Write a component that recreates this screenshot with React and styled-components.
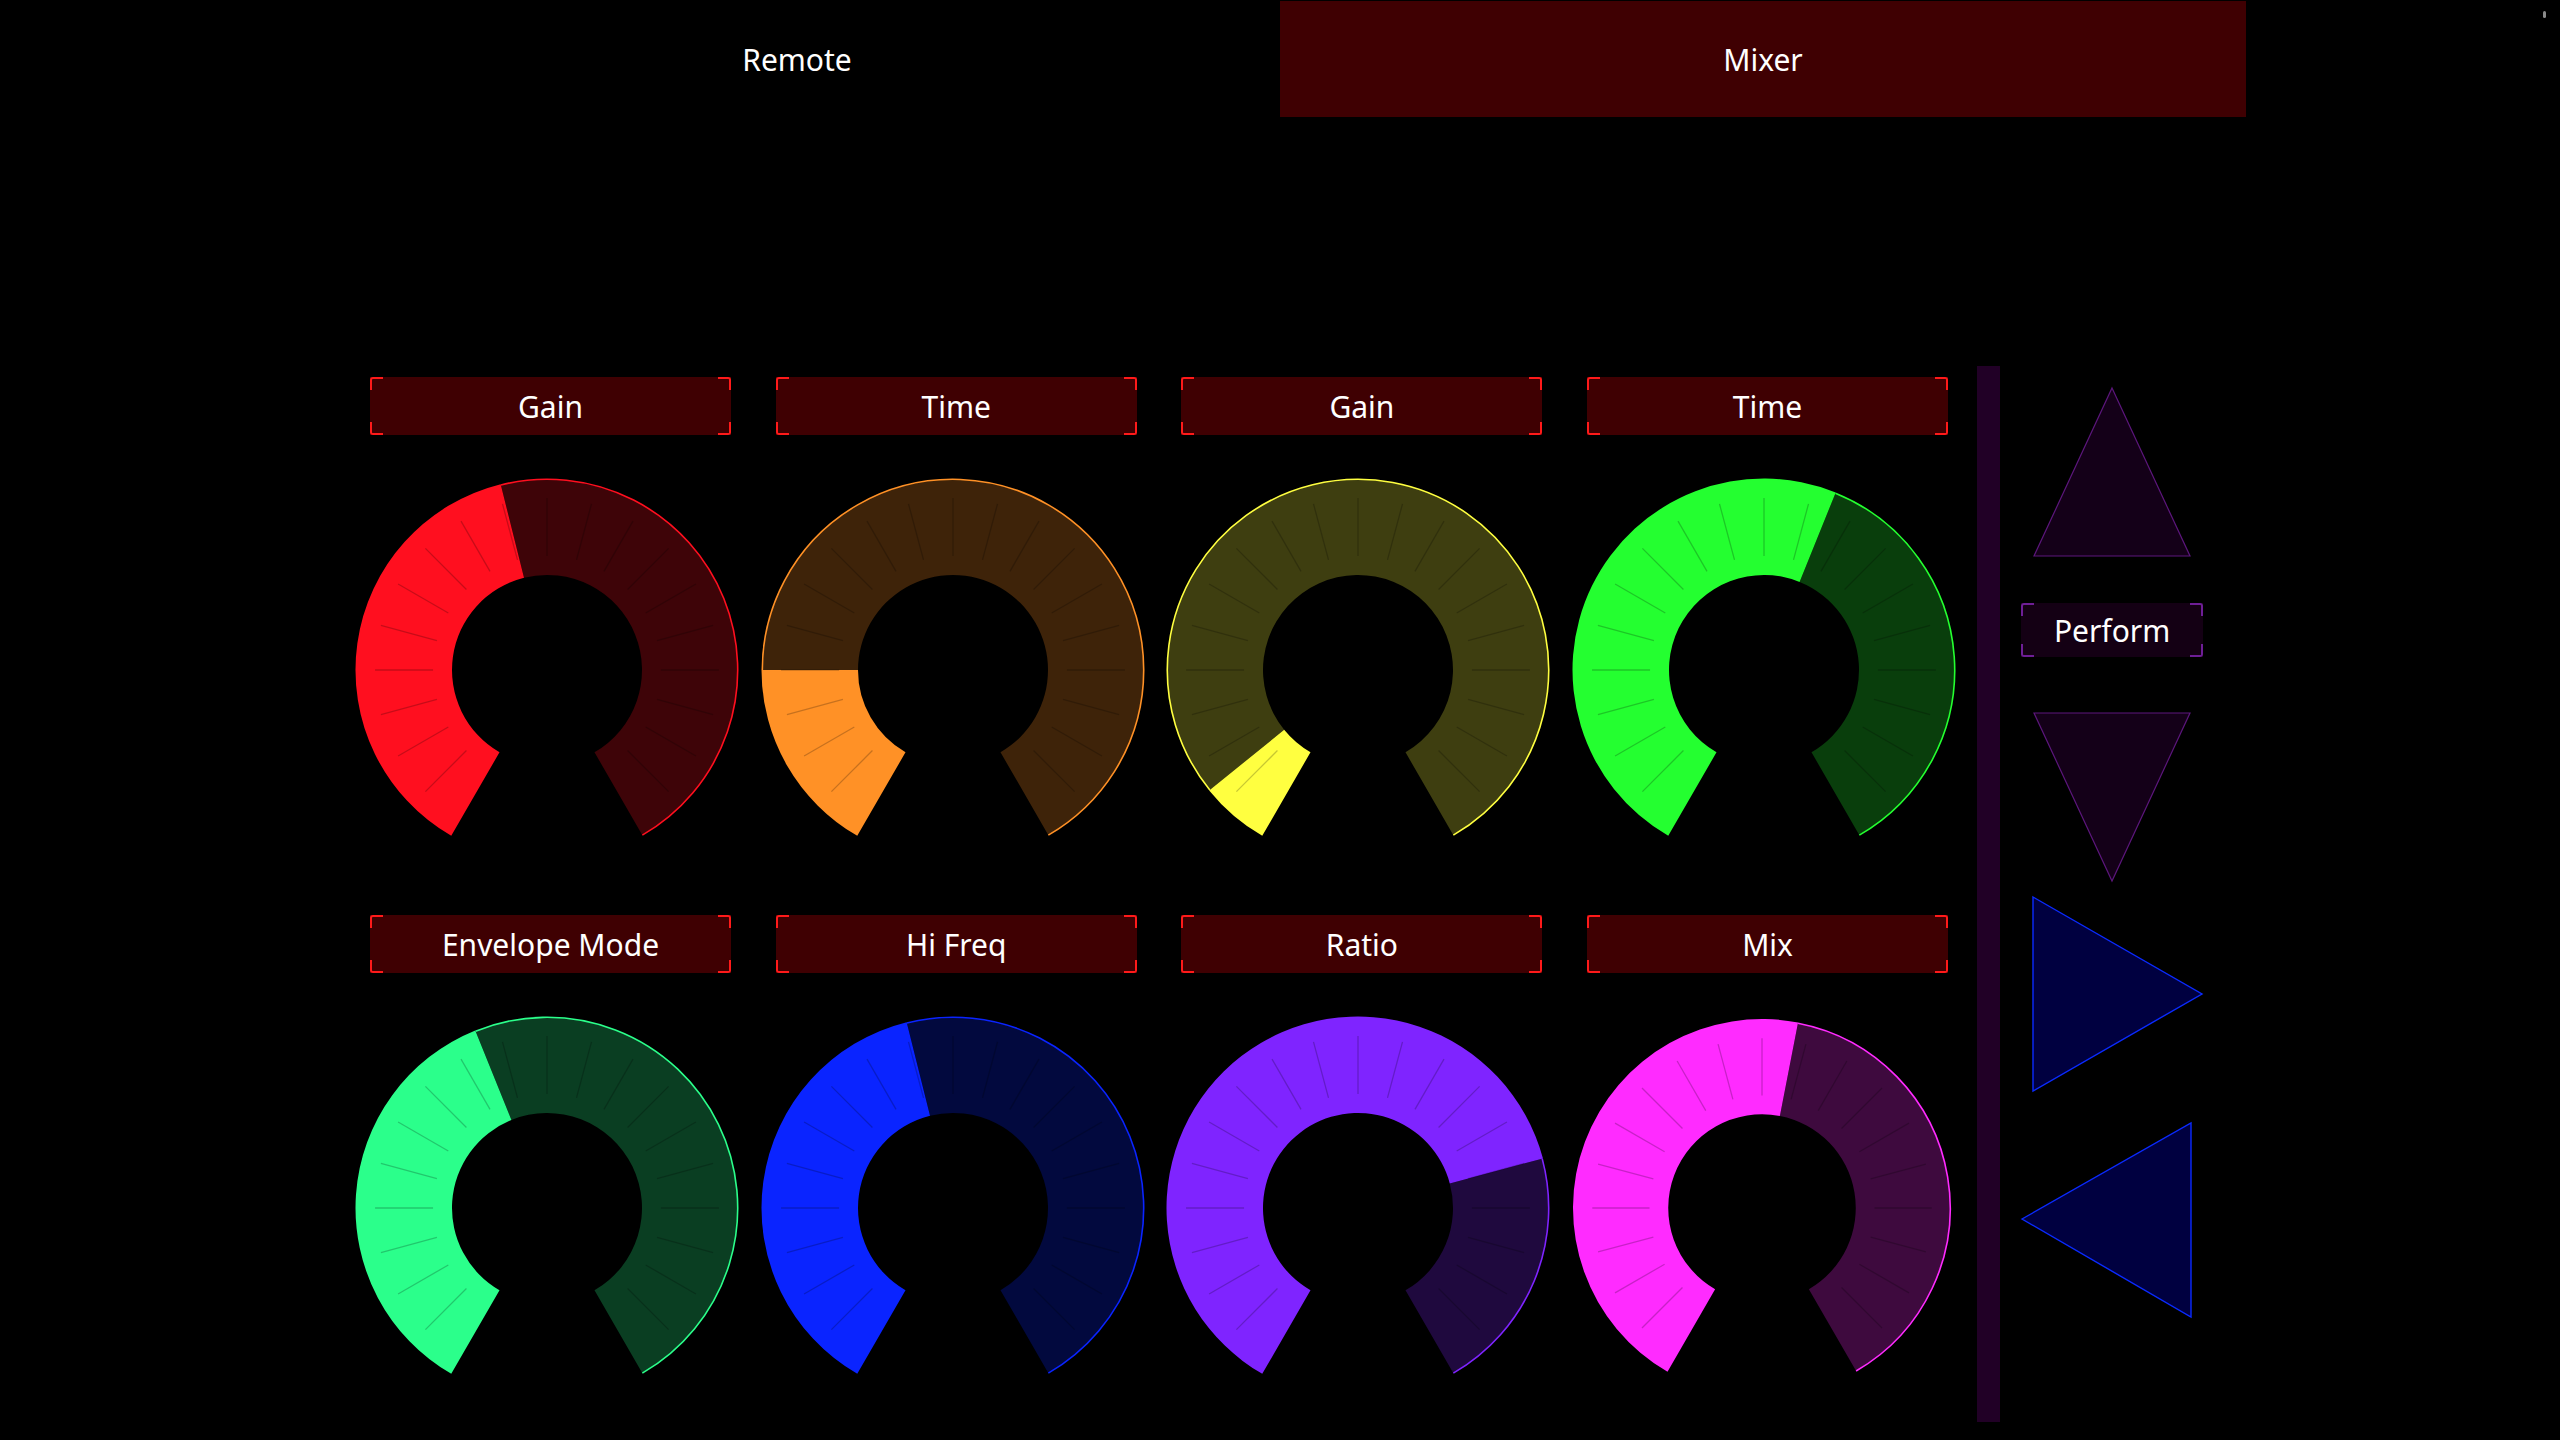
import React from 'react';
import styled, { createGlobalStyle } from 'styled-components';

const GlobalStyle = createGlobalStyle`
  body {
    margin: 0;
    padding: 0;
    background-color: #000000;
    font-family: 'Noto Sans', 'Open Sans', sans-serif;
    color: #ffffff;
  }
`;

const Page = styled.div`
  position: relative;
  width: 2560px;
  height: 1440px;
  overflow: hidden;
  background-color: #000000;
`;

const TabBar = styled.div`
  display: flex;
  justify-content: center;
  padding-top: 1px;
  height: 116px;
`;

const Tab = styled.div`
  width: 966px;
  height: 116px;
  display: flex;
  align-items: center;
  justify-content: center;
  font-size: 30px;
  color: #ffffff;
  background-color: ${(p) => (p.$active ? '#3f0002' : 'transparent')};
`;

const Dot = styled.div`
  position: absolute;
  top: 11px;
  right: 14px;
  width: 3px;
  height: 7px;
  border-radius: 2px;
  background-color: #8a8a8a;
`;

const Main = styled.div`
  display: flex;
  align-items: flex-start;
  margin-top: 249px;
  padding-left: 370px;
`;

const KnobGrid = styled.div`
  display: grid;
  grid-template-columns: repeat(4, 361px);
  column-gap: 44.7px;
  padding-top: 11px;
  flex-shrink: 0;
`;

const Cell = styled.div`
  display: flex;
  flex-direction: column;
`;

const Label = styled.div`
  position: relative;
  box-sizing: border-box;
  height: ${(p) => p.$h || 58}px;
  width: ${(p) => (p.$w ? `${p.$w}px` : '100%')};
  display: flex;
  align-items: center;
  justify-content: center;
  font-size: ${(p) => p.$size || 30}px;
  color: #ffffff;
  background-color: ${(p) => p.$bg};
`;

const Corner = styled.span`
  position: absolute;
  width: 11px;
  height: 11px;
  border-color: ${(p) => p.$color};
  border-style: solid;
  border-width: 0;
  ${(p) => (p.$top ? 'top: 0;' : 'bottom: 0;')}
  ${(p) => (p.$left ? 'left: 0;' : 'right: 0;')}
  ${(p) => (p.$top ? 'border-top-width: 2px;' : 'border-bottom-width: 2px;')}
  ${(p) => (p.$left ? 'border-left-width: 2px;' : 'border-right-width: 2px;')}
  border-${(p) => (p.$top ? 'top' : 'bottom')}-${(p) => (p.$left ? 'left' : 'right')}-radius: 3px;
`;

const KnobSvg = styled.svg`
  display: block;
  width: 405px;
  height: 480px;
  margin-left: -22px;
  overflow: visible;
`;

const Divider = styled.div`
  flex-shrink: 0;
  width: 23px;
  height: 1056px;
  margin-left: 29px;
  background-color: #210026;
`;

const SidePanel = styled.div`
  flex-shrink: 0;
  width: 182px;
  margin-left: 21px;
  display: flex;
  flex-direction: column;
  align-items: flex-start;
`;

const Arrow = styled.svg`
  display: block;
  flex-shrink: 0;
  margin-top: ${(p) => p.$mt}px;
  margin-left: ${(p) => p.$ml}px;
  overflow: visible;
`;

const PerformSlot = styled.div`
  margin-top: ${(p) => p.$mt}px;
`;

const LabelBox = ({ children, bg, corner, ...rest }) => (
  <Label $bg={bg} {...rest}>
    {children}
    <Corner $color={corner} $top $left />
    <Corner $color={corner} $top />
    <Corner $color={corner} $left />
    <Corner $color={corner} />
  </Label>
);

const CY = 235;
const RIN_RATIO = 95 / 191.5;

const makeGeom = (cx, R) => {
  const rin = R * RIN_RATIO;
  const pt = (r, deg) => {
    const a = (deg * Math.PI) / 180;
    return [cx + r * Math.sin(a), CY - r * Math.cos(a)];
  };
  const sector = (r1, r2, a0, a1) => {
    const large = a1 - a0 > 180 ? 1 : 0;
    const [x0, y0] = pt(r2, a0);
    const [x1, y1] = pt(r2, a1);
    const [x2, y2] = pt(r1, a1);
    const [x3, y3] = pt(r1, a0);
    return `M${x0} ${y0} A${r2} ${r2} 0 ${large} 1 ${x1} ${y1} L${x2} ${y2} A${r1} ${r1} 0 ${large} 0 ${x3} ${y3} Z`;
  };
  const arc = (r, a0, a1) => {
    const large = a1 - a0 > 180 ? 1 : 0;
    const [x0, y0] = pt(r, a0);
    const [x1, y1] = pt(r, a1);
    return `M${x0} ${y0} A${r} ${r} 0 ${large} 1 ${x1} ${y1}`;
  };
  return { rin, pt, sector, arc };
};

const ticks = [];
for (let a = -135; a <= 135; a += 15) ticks.push(a);

const Knob = ({ color, value, R = 191.5, cx = 199 }) => {
  const { rin, pt, sector, arc } = makeGeom(cx, R);
  return (
    <KnobSvg viewBox="0 0 405 480">
      <path d={sector(rin, R - 1, value, 150)} fill={color} fillOpacity="0.245" />
      <path d={sector(rin, R, -150, value)} fill={color} />
      {ticks.map((a) => {
        const [x1, y1] = pt(R * 0.595, a);
        const [x2, y2] = pt(R * 0.898, a);
        return <line key={a} x1={x1} y1={y1} x2={x2} y2={y2} stroke="rgba(0,0,0,0.22)" strokeWidth="1.3" />;
      })}
      <path d={arc(R - 0.8, value, 150)} fill="none" stroke={color} strokeWidth="1.6" />
    </KnobSvg>
  );
};

const knobs = [
  { label: 'Gain', color: '#ff0f1f', value: -14 },
  { label: 'Time', color: '#ff9126', value: -90 },
  { label: 'Gain', color: '#ffff40', value: -129 },
  { label: 'Time', color: '#24ff30', value: 22 },
  { label: 'Envelope Mode', color: '#2bff8b', value: -22 },
  { label: 'Hi Freq', color: '#0a24ff', value: -14 },
  { label: 'Ratio', color: '#7f24ff', value: 75 },
  { label: 'Mix', color: '#ff2bff', value: 11, R: 189, cx: 197 },
];

const PURPLE_FILL = '#140018';
const PURPLE_LINE = '#5c167c';
const BLUE_FILL = '#000040';
const BLUE_LINE = '#0a2aff';

export default function App() {
  return (
    <Page>
      <GlobalStyle />
      <TabBar>
        <Tab>Remote</Tab>
        <Tab $active>Mixer</Tab>
      </TabBar>
      <Dot />
      <Main>
        <KnobGrid>
          {knobs.map((k, i) => (
            <Cell key={i}>
              <LabelBox bg="#3f0002" corner="#ff1a1a">{k.label}</LabelBox>
              <Knob color={k.color} value={k.value} R={k.R} cx={k.cx} />
            </Cell>
          ))}
        </KnobGrid>
        <Divider />
        <SidePanel>
          <Arrow width="158" height="170" $mt={21} $ml={12} viewBox="0 0 158 170">
            <polygon points="79,1 157,169 1,169" fill={PURPLE_FILL} stroke={PURPLE_LINE} strokeWidth="1.2" />
          </Arrow>
          <PerformSlot $mt={46}>
            <LabelBox bg="#140014" corner="#6e1e96" $w={182} $h={54} $size={30}>Perform</LabelBox>
          </PerformSlot>
          <Arrow width="158" height="170" $mt={55} $ml={12} viewBox="0 0 158 170">
            <polygon points="1,1 157,1 79,169" fill={PURPLE_FILL} stroke={PURPLE_LINE} strokeWidth="1.2" />
          </Arrow>
          <Arrow width="172" height="196" $mt={14} $ml={11} viewBox="0 0 172 196">
            <polygon points="1,1 170,98 1,195" fill={BLUE_FILL} stroke={BLUE_LINE} strokeWidth="1.4" />
          </Arrow>
          <Arrow width="172" height="196" $mt={30} $ml={0} viewBox="0 0 172 196">
            <polygon points="1,97 170,1 170,195" fill={BLUE_FILL} stroke={BLUE_LINE} strokeWidth="1.4" />
          </Arrow>
        </SidePanel>
      </Main>
    </Page>
  );
}
